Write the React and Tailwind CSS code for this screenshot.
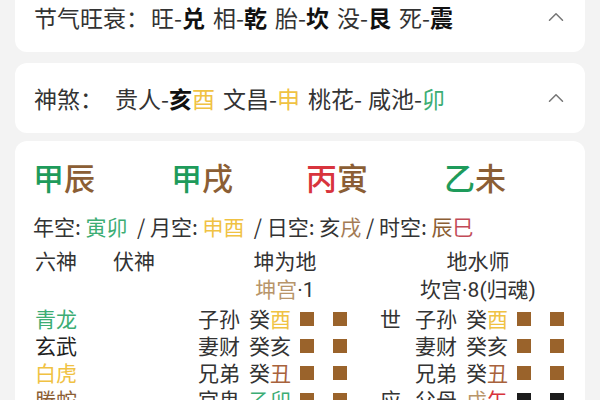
import { ChevronUp } from 'lucide-react'

const FONT = { fontFamily: '"Noto Sans CJK SC", "Noto Sans", sans-serif' }
const LATIN = { fontFamily: 'Roboto, "Noto Sans", sans-serif' }

const C = {
  green: 'text-[#1e9b5b]',
  lgreen: 'text-[#3cad74]',
  brown: 'text-[#8b5e34]',
  tan: 'text-[#b8956a]',
  red: 'text-[#d8343d]',
  yellow: 'text-[#f0c243]',
  rust: 'text-[#a8623c]',
  pink: 'text-[#c24a57]',
}

const ROWS = [
  {
    god: '青龙', godColor: C.lgreen,
    left: { rel: '子孙', stem: '癸', branch: '酉', branchColor: C.yellow },
    mark: '世',
    right: { rel: '子孙', stem: '癸', branch: '酉', branchColor: C.yellow },
  },
  {
    god: '玄武', godColor: 'text-[#222]',
    left: { rel: '妻财', stem: '癸', branch: '亥' },
    mark: '',
    right: { rel: '妻财', stem: '癸', branch: '亥' },
  },
  {
    god: '白虎', godColor: C.yellow,
    left: { rel: '兄弟', stem: '癸', branch: '丑', branchColor: C.rust },
    mark: '',
    right: { rel: '兄弟', stem: '癸', branch: '丑', branchColor: C.rust },
  },
  {
    god: '螣蛇', godColor: C.brown,
    left: { rel: '官鬼', stem: '乙', stemColor: C.lgreen, branch: '卯', branchColor: C.lgreen },
    mark: '应',
    right: { rel: '父母', stem: '戊', stemColor: C.tan, branch: '午', branchColor: C.red, dark: true },
  },
]

function Yao({ line }) {
  const sq = line.dark ? 'bg-[#1c1c1c]' : 'bg-[#9a632b]'
  return (
    <div className="flex items-center">
      <span className="w-[42px]">{line.rel}</span>
      <span className="ml-[9px] flex">
        <span className={line.stemColor || ''}>{line.stem}</span>
        <span className={line.branchColor || ''}>{line.branch}</span>
      </span>
      <span className={`ml-[9px] w-[14px] h-[14px] ${sq}`} />
      <span className={`ml-[19px] w-[14px] h-[14px] ${sq}`} />
    </div>
  )
}

function Collapsible({ children, className = '' }) {
  return (
    <div className={`bg-white rounded-xl h-[70px] flex items-center pl-[19px] pr-[16px] ${className}`}>
      <div className="flex-1 text-[23px] text-[#333] leading-none flex items-center">{children}</div>
      <ChevronUp className="w-[26px] h-[26px] text-[#777]" strokeWidth={1.4} />
    </div>
  )
}

export default function App() {
  return (
    <div className="w-[600px] h-[400px] overflow-hidden bg-[#f3f3f3] px-[15px]" style={FONT}>
      <Collapsible className="-mt-[18px]">
        <span>节气旺衰：</span>
        <span className="ml-[2px]">旺-<b className="text-[#111]">兑</b></span>
        <span className="ml-[8px]">相-<b className="text-[#111]">乾</b></span>
        <span className="ml-[8px]">胎-<b className="text-[#111]">坎</b></span>
        <span className="ml-[8px]">没-<b className="text-[#111]">艮</b></span>
        <span className="ml-[8px]">死-<b className="text-[#111]">震</b></span>
      </Collapsible>

      <Collapsible className="mt-[11px]">
        <span>神煞：</span>
        <span className="ml-[12px]">贵人-<b className="text-[#111]">亥</b><span className={C.yellow}>酉</span></span>
        <span className="ml-[8px]">文昌-<span className={C.yellow}>申</span></span>
        <span className="ml-[8px]">桃花-</span>
        <span className="ml-[6px]">咸池-<span className={C.lgreen}>卯</span></span>
      </Collapsible>

      <div className="mt-[8px] bg-white rounded-xl h-[300px] pl-[18px] pt-[14px] text-[#333]">
        <div className="flex text-[31px] leading-[44px] font-medium">
          <div className="w-[138px]"><span className={C.green}>甲</span><span className={C.brown}>辰</span></div>
          <div className="w-[135px]"><span className={C.green}>甲</span><span className={C.brown}>戌</span></div>
          <div className="w-[138px]"><span className={C.red}>丙</span><span className={C.brown}>寅</span></div>
          <div><span className={C.green}>乙</span><span className={C.brown}>未</span></div>
        </div>

        <div className="mt-[12px] text-[21px] leading-[30px] whitespace-pre">
          年空: <span className={C.lgreen}>寅卯</span>  / 月空: <span className={C.yellow}>申酉</span>  / 日空: 亥<span className="text-[#a47b55]">戌</span> / 时空: <span className={C.brown}>辰</span><span className={C.pink}>巳</span>
        </div>

        <div className="mt-[5px] text-[21px] leading-[28px] whitespace-nowrap">
          <div className="flex">
            <span className="w-[80px] pl-[2px]">六神</span>
            <span className="w-[85px]">伏神</span>
            <span className="w-[174px] text-center">坤为地</span>
            <span className="w-[43px]" />
            <span className="w-[126px] text-center">地水师</span>
          </div>
          <div className="flex">
            <span className="w-[165px]" />
            <span className="w-[174px] text-center"><span className={C.tan}>坤宫</span><span style={LATIN}>·1</span></span>
            <span className="w-[43px]" />
            <span className="w-[126px] text-center">坎宫<span style={LATIN}>·8(</span>归魂<span style={LATIN}>)</span></span>
          </div>
          <div className="mt-[1px] leading-none">
            {ROWS.map((r, i) => (
              <div key={i} className="flex items-center h-[27px]">
                <span className={`w-[80px] pl-[2px] ${r.godColor}`}>{r.god}</span>
                <span className="w-[85px]" />
                <div className="w-[182px]"><Yao line={r.left} /></div>
                <span className="w-[35px]">{r.mark}</span>
                <Yao line={r.right} />
              </div>
            ))}
          </div>
        </div>
      </div>
    </div>
  )
}
